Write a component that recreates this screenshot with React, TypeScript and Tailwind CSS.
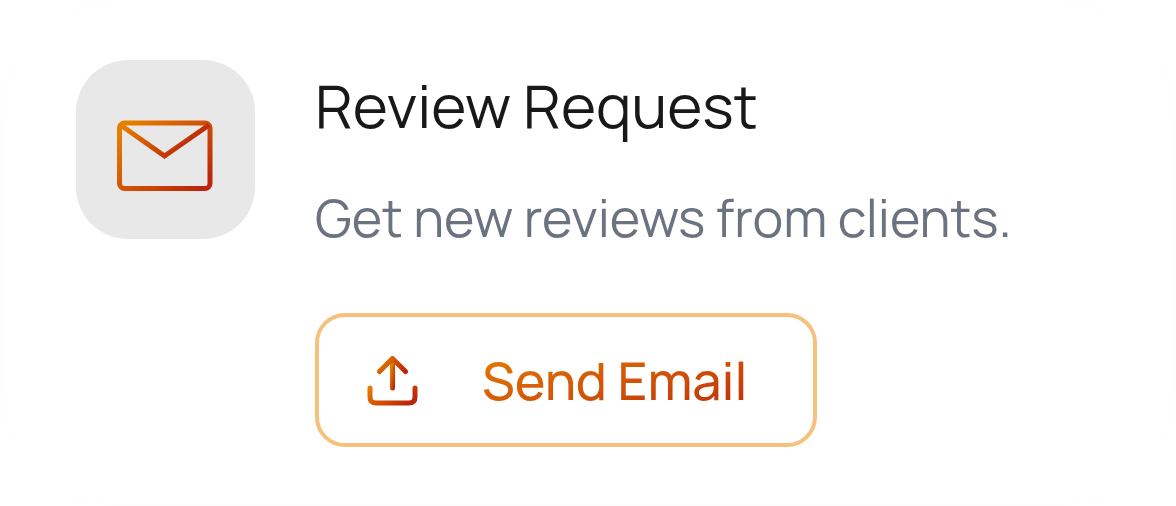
function Gradient({ id, x1, y1, x2, y2 }: { id: string; x1: number; y1: number; x2: number; y2: number }) {
  return (
    <linearGradient id={id} gradientUnits="userSpaceOnUse" x1={x1} y1={y1} x2={x2} y2={y2}>
      <stop offset="0" stopColor="#e67e00" />
      <stop offset="1" stopColor="#bc250a" />
    </linearGradient>
  );
}

function MailIcon() {
  return (
    <svg width="96" height="71" viewBox="0 0 96 71" fill="none" strokeWidth="5" aria-hidden="true">
      <defs>
        <Gradient id="mail-body" x1={16} y1={0} x2={80} y2={71} />
        <Gradient id="mail-flap" x1={14} y1={0} x2={56} y2={46} />
      </defs>
      <rect x="2.5" y="3" width="90.5" height="65.5" rx="5" stroke="url(#mail-body)" />
      <path d="M3.5 5 47.5 36 92 5" stroke="url(#mail-flap)" />
    </svg>
  );
}

function UploadIcon() {
  return (
    <svg width="51" height="51" viewBox="0 0 51 51" fill="none" strokeWidth="5" strokeLinecap="round" strokeLinejoin="round" aria-hidden="true">
      <defs>
        <Gradient id="upload-tray" x1={12} y1={22} x2={36} y2={52} />
        <Gradient id="upload-head" x1={15} y1={0} x2={36} y2={18} />
        <Gradient id="upload-stem" x1={23} y1={19} x2={29} y2={20} />
      </defs>
      <path d="M3 32v9q0 6 6 6h33q6 0 6-6v-9" stroke="url(#upload-tray)" />
      <path d="M25.5 4v28" stroke="url(#upload-stem)" />
      <path d="M12.5 15.5l13-13 13 13" stroke="url(#upload-head)" />
    </svg>
  );
}

export default function App() {
  return (
    <main className="bg-white font-['Manrope','Inter',sans-serif]">
      <section className="flex items-start gap-15 rounded-[120px] border border-[#fdfdfd] bg-white px-[75px] pt-[59px] pb-[58px]">
        <div className="flex size-[179px] shrink-0 items-center justify-center rounded-[52px] bg-[#e8e8e8] pt-3 pr-px">
          <MailIcon />
        </div>
        <div className="flex min-w-0 flex-col items-start">
          <h2 className="mt-[9px] text-[60px] leading-[72px] text-[#181818]">Review Request</h2>
          <p className="mt-[41px] text-[52px] leading-[72px] text-[#6b7280]">Get new reviews from clients.</p>
          <button type="button" className="mt-[59px] flex h-[134px] items-center gap-16 rounded-[30px] border-4 border-[#f5c27e] pt-[2px] pr-[65px] pl-12 text-[52px] leading-[72px] font-medium">
            <UploadIcon />
            <span className="bg-linear-to-br from-[#e67e00] to-[#bc250a] bg-clip-text text-transparent">Send Email</span>
          </button>
        </div>
      </section>
    </main>
  );
}
